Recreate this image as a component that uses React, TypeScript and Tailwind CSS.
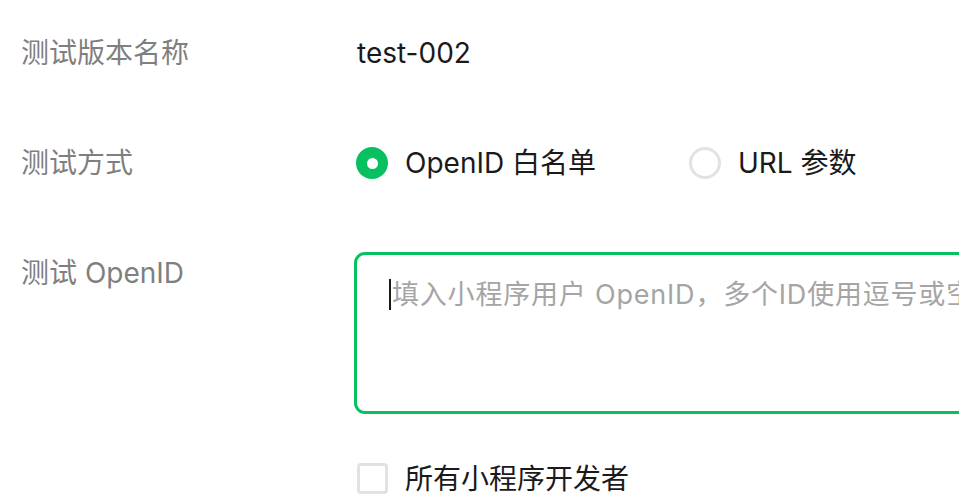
import React from "react";

const font = { fontFamily: 'Inter, "Noto Sans CJK SC", sans-serif' };

export default function App() {
  return (
    <div
      className="w-[959px] h-[498px] overflow-hidden bg-white relative text-[28px] leading-none"
      style={font}
    >
      <div className="flex items-center h-[40px] mt-[33px] pl-[21px]">
        <div className="w-[336px] shrink-0 text-[#7f7f7f]">测试版本名称</div>
        <div className="text-[#1a1a1a]">test-002</div>
      </div>
      <div className="flex items-center h-[40px] mt-[70px] pl-[21px]">
        <div className="w-[335px] shrink-0 text-[#7f7f7f]">测试方式</div>
        <div className="flex items-center w-[333px] shrink-0">
          <div className="w-[32px] h-[32px] rounded-full bg-[#07c160] flex items-center justify-center">
            <div className="w-[11px] h-[11px] rounded-full bg-white" />
          </div>
          <div className="ml-[17px] text-[#1a1a1a]">OpenID 白名单</div>
        </div>
        <div className="flex items-center shrink-0">
          <div className="w-[32px] h-[32px] rounded-full border-[3px] border-[#e2e2e2]" />
          <div className="ml-[17px] text-[#1a1a1a]">URL 参数</div>
        </div>
      </div>
      <div className="flex items-start mt-[69px] pl-[21px]">
        <div className="w-[333px] shrink-0 text-[#7f7f7f] mt-[7px]">测试 OpenID</div>
        <div className="w-[700px] h-[162px] shrink-0 border-[3px] border-[#07c160] rounded-[11px] pl-[32px] pt-[24px]">
          <div className="flex items-center whitespace-nowrap text-[#a5a5a5] text-[27px] tracking-[0.8px]">
            <span className="w-[2px] h-[31px] shrink-0 bg-[#1a1a1a] mr-[1px]" />
            <span className="shrink-0">填入小程序用户 OpenID，多个ID使用逗号或空格分隔</span>
          </div>
        </div>
      </div>
      <div className="flex items-center mt-[49px] pl-[357px]">
        <div className="w-[31px] h-[31px] shrink-0 rounded-[4px] border-[3px] border-[#e2e2e2]" />
        <div className="ml-[17px] text-[#1a1a1a]">所有小程序开发者</div>
      </div>
    </div>
  );
}
